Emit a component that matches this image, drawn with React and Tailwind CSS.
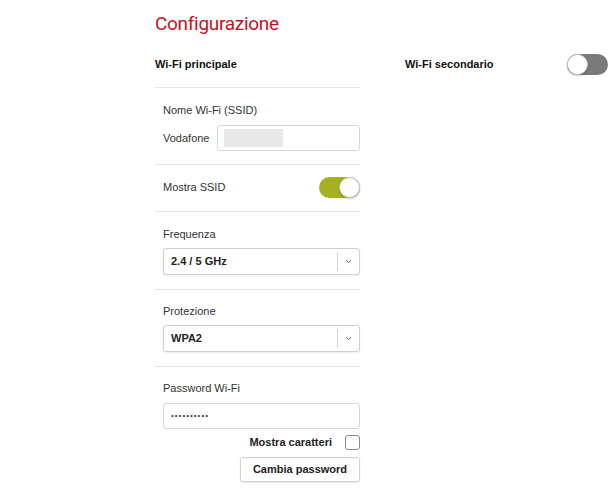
import { ChevronDown } from "lucide-react";

function Toggle({ on }) {
  return (
    <div
      className={
        "relative w-[41px] h-[21px] rounded-full flex-shrink-0 " +
        (on ? "bg-[#a6b021]" : "bg-[#7a7a7a]")
      }
    >
      <div
        className={
          "absolute top-0 w-[21px] h-[21px] rounded-full bg-white border border-[#c8c8c8] shadow-[0_1px_2px_rgba(0,0,0,0.25)] " +
          (on ? "right-0" : "left-0")
        }
      />
    </div>
  );
}

function Select({ value }) {
  return (
    <div className="mt-[6px] h-[27px] flex items-stretch rounded-[3px] border border-[#d0d0d0] shadow-[0_1px_2px_rgba(0,0,0,0.08)] bg-white">
      <div className="flex-1 flex items-center pl-[7px] text-[11px] font-bold text-[#222]">{value}</div>
      <div className="w-[22px] flex items-center justify-center border-l border-[#d6d6d6] my-[3px]">
        <ChevronDown size={9} strokeWidth={2.5} className="text-[#555]" />
      </div>
    </div>
  );
}

function Divider() {
  return <div className="h-px bg-[#e6e6e6]" />;
}

export default function App() {
  return (
    <div className="w-[610px] h-[501px] bg-white flex pl-[155px]" style={{ fontFamily: '"Liberation Sans", Arial, sans-serif' }}>
      {/* left column */}
      <div className="w-[205px] flex flex-col">
        <div className="h-[44px] flex items-center pt-[3px]">
          <h1 className="text-[19px] tracking-[-0.3px] text-[#c5121f] leading-none" style={{ fontFamily: 'Roboto, sans-serif' }}>
            Configurazione
          </h1>
        </div>
        <div className="h-[43px] flex items-center pb-[3px] text-[11px] font-bold text-[#111]">Wi-Fi principale</div>
        <Divider />

        {/* SSID */}
        <div className="pl-[8px] pt-[14px] pb-[13px]">
          <div className="h-[16px] flex items-center text-[11px] text-[#333]">Nome Wi-Fi (SSID)</div>
          <div className="mt-[7px] flex items-center">
            <span className="w-[54px] text-[11px] text-[#333]">Vodafone</span>
            <div className="flex-1 h-[26px] rounded-[3px] border border-[#d8d8d8] flex items-center pl-[6px]">
              <div className="w-[59px] h-[18px] bg-[#e8e8e8]" />
            </div>
          </div>
        </div>
        <Divider />

        {/* Mostra SSID */}
        <div className="pl-[8px] pt-[12px] pb-[13px] flex items-center justify-between">
          <span className="text-[11px] text-[#333]">Mostra SSID</span>
          <Toggle on />
        </div>
        <Divider />

        {/* Frequenza */}
        <div className="pl-[8px] pt-[14px] pb-[14px]">
          <div className="h-[16px] flex items-center text-[11px] text-[#333]">Frequenza</div>
          <Select value="2.4 / 5 GHz" />
        </div>
        <Divider />

        {/* Protezione */}
        <div className="pl-[8px] pt-[13px] pb-[14px]">
          <div className="h-[16px] flex items-center text-[11px] text-[#333]">Protezione</div>
          <Select value="WPA2" />
        </div>
        <Divider />

        {/* Password */}
        <div className="pl-[8px] pt-[13px]">
          <div className="h-[16px] flex items-center text-[11px] text-[#333]">Password Wi-Fi</div>
          <div className="mt-[7px] h-[26px] rounded-[3px] border border-[#d8d8d8] flex items-center pl-[7px] text-[8px] tracking-[1px] text-[#444]">
            ••••••••••
          </div>
          <div className="mt-[5px] h-[16px] flex items-center justify-end gap-[13px]">
            <span className="text-[11px] font-bold text-[#222]">Mostra caratteri</span>
            <div className="w-[15px] h-[15px] rounded-[3px] border border-[#8a8a8a] bg-white" />
          </div>
          <div className="mt-[7px] flex justify-end">
            <button className="w-[120px] h-[25px] rounded-[3px] border border-[#cfcfcf] bg-white shadow-[0_1px_2px_rgba(0,0,0,0.1)] text-[11px] font-bold text-[#222]">
              Cambia password
            </button>
          </div>
        </div>
      </div>

      {/* right column */}
      <div className="ml-[45px] w-[203px] flex flex-col">
        <div className="h-[44px]" />
        <div className="h-[43px] flex items-center justify-between pb-[3px]">
          <span className="text-[11px] font-bold text-[#111]">Wi-Fi secondario</span>
          <Toggle />
        </div>
      </div>
    </div>
  );
}
